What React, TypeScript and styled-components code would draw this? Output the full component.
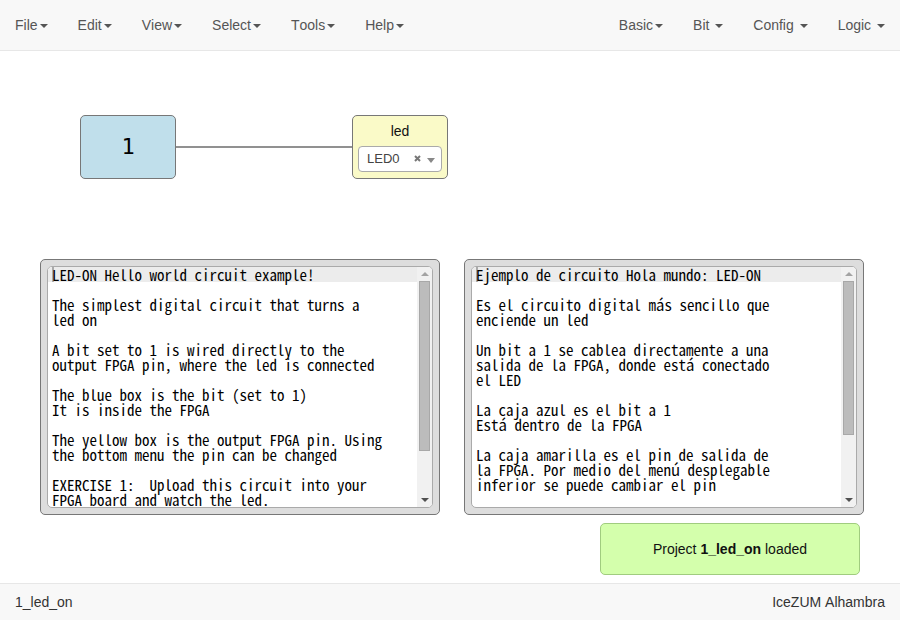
import React, { useState } from "react";
import styled, { createGlobalStyle } from "styled-components";

const GlobalStyle = createGlobalStyle`
  * { box-sizing: border-box; }
  html, body { margin: 0; }
  body {
    background: #fff;
    color: #333;
    font-family: "Liberation Sans", Arial, sans-serif;
    font-size: 14px;
    font-kerning: none;
    line-height: 20px;
  }
  button, select, textarea { font: inherit; font-kerning: none; }
`;

const Page = styled.div`
  display: flex;
  flex-direction: column;
  min-height: 100vh;
`;

const Navbar = styled.nav`
  display: flex;
  justify-content: space-between;
  background: #f8f8f8;
  border-bottom: 1px solid #e7e7e7;
`;

const MenuGroup = styled.div`
  display: flex;
`;

const MenuButton = styled.button`
  padding: 15px;
  border: 0;
  background: none;
  color: #555;
  line-height: 20px;
  white-space: pre;
  cursor: pointer;
`;

const Caret = styled.span`
  display: inline-block;
  margin-left: 2px;
  vertical-align: middle;
  border-top: 4px solid;
  border-right: 4px solid transparent;
  border-left: 4px solid transparent;
`;

const Canvas = styled.main`
  position: relative;
  flex: 1;
  min-height: 532px;
  overflow: hidden;
`;

const Wires = styled.svg`
  position: absolute;
  inset: 0;
  width: 100%;
  height: 100%;
`;

const Node = styled.div<{ $x: number; $y: number }>`
  position: absolute;
  left: ${(p) => p.$x}px;
  top: ${(p) => p.$y}px;
  border: 1px solid #777;
  border-radius: 5px;
`;

const ConstantBlock = styled(Node)`
  display: grid;
  place-items: center;
  width: 96px;
  height: 64px;
  background: #c0dfeb;
  color: #000;
  font-family: "DejaVu Sans Mono", monospace;
  font-size: 22px;
`;

const OutputBlock = styled(Node)`
  display: flex;
  flex-direction: column;
  gap: 5px;
  width: 96px;
  height: 64px;
  padding: 5px;
  background: #fafac8;
`;

const BlockLabel = styled.label`
  color: #111;
  text-align: center;
`;

const PinField = styled.div`
  position: relative;
  height: 26px;
`;

const PinSelect = styled.select`
  appearance: none;
  display: block;
  width: 100%;
  height: 100%;
  padding: 0 28px 0 8px;
  border: 1px solid #aaa;
  border-radius: 4px;
  background: #fff;
  color: #444;
  font-size: 13px;
`;

const ClearButton = styled.button`
  position: absolute;
  top: 8px;
  right: 20px;
  display: flex;
  padding: 1px;
  border: 0;
  background: none;
`;

const PinArrow = styled.span`
  position: absolute;
  top: 12px;
  right: 7px;
  border-top: 5px solid #888;
  border-right: 4px solid transparent;
  border-left: 4px solid transparent;
  pointer-events: none;
`;

const NoteBlock = styled(Node)`
  width: 400px;
  padding: 6px;
  background: #ddd;
`;

const NoteEditor = styled.div`
  display: flex;
  height: 242px;
  border: 1px solid #aaa;
  border-radius: 5px;
  background: #fff;
  overflow: hidden;
`;

const NoteText = styled.textarea`
  flex: 1;
  min-width: 0;
  padding: 0 4px;
  border: 0;
  outline: 0;
  resize: none;
  overflow: hidden;
  white-space: pre;
  color: #000;
  background:
    linear-gradient(#aaa, #aaa) 4px 0 / 2px 15px no-repeat,
    linear-gradient(#ececec, #ececec) 0 0 / 100% 15px no-repeat;
  font-family: "Noto Sans Mono CJK SC", "DejaVu Sans Mono", monospace;
  font-size: 15px;
  line-height: 15px;
`;

const Scrollbar = styled.div`
  display: flex;
  flex-direction: column;
  align-items: center;
  justify-content: space-between;
  width: 15px;
  padding: 5px 0;
  background: #f1f1f1;
`;

const ScrollTrack = styled.div`
  flex: 1;
  width: 11px;
  margin: 5px 0;
`;

const ScrollThumb = styled.div<{ $size: number }>`
  height: ${(p) => p.$size}px;
  border: 1px solid #a8a8a8;
  background: #bcbcbc;
`;

const ScrollArrow = styled.span<{ $up?: boolean }>`
  border: 0 solid transparent;
  border-width: ${(p) => (p.$up ? "0 4px 4px" : "4px 4px 0")};
  border-bottom-color: ${(p) => (p.$up ? "#a3a3a3" : "transparent")};
  border-top-color: ${(p) => (p.$up ? "transparent" : "#505050")};
`;

const Toast = styled.div`
  position: absolute;
  right: 40px;
  bottom: 8px;
  width: 260px;
  padding: 15px;
  border: 1px solid #a0cc7f;
  border-radius: 5px;
  background: #d4ffac;
  color: #111;
  text-align: center;
`;

const StatusBar = styled.footer`
  display: flex;
  justify-content: space-between;
  padding: 8px 15px;
  border-top: 1px solid #e7e7e7;
  background: #f8f8f8;
`;

const mainMenus = ["File", "Edit", "View", "Select", "Tools", "Help"];
const blockMenus = ["Basic", "Bit ", "Config ", "Logic "];

const englishNote = `LED-ON Hello world circuit example!

The simplest digital circuit that turns a
led on

A bit set to 1 is wired directly to the
output FPGA pin, where the led is connected

The blue box is the bit (set to 1)
It is inside the FPGA

The yellow box is the output FPGA pin. Using
the bottom menu the pin can be changed

EXERCISE 1:  Upload this circuit into your
FPGA board and watch the led.`;

const spanishNote = `Ejemplo de circuito Hola mundo: LED-ON

Es el circuito digital más sencillo que
enciende un led

Un bit a 1 se cablea directamente a una
salida de la FPGA, donde está conectado
el LED

La caja azul es el bit a 1
Está dentro de la FPGA

La caja amarilla es el pin de salida de
la FPGA. Por medio del menú desplegable
inferior se puede cambiar el pin
`;

function Menu({ label }: { label: string }) {
  return (
    <MenuButton type="button" aria-haspopup="menu">
      {label}
      <Caret />
    </MenuButton>
  );
}

interface NoteProps {
  x: number;
  y: number;
  name: string;
  text: string;
  thumb: number;
}

function Note({ x, y, name, text, thumb }: NoteProps) {
  return (
    <NoteBlock $x={x} $y={y}>
      <NoteEditor>
        <NoteText aria-label={name} defaultValue={text} spellCheck={false} />
        <Scrollbar aria-hidden="true">
          <ScrollArrow $up />
          <ScrollTrack>
            <ScrollThumb $size={thumb} />
          </ScrollTrack>
          <ScrollArrow />
        </Scrollbar>
      </NoteEditor>
    </NoteBlock>
  );
}

export default function App() {
  const [pin, setPin] = useState("LED0");

  return (
    <Page>
      <GlobalStyle />
      <Navbar>
        <MenuGroup>
          {mainMenus.map((label) => (
            <Menu key={label} label={label} />
          ))}
        </MenuGroup>
        <MenuGroup>
          {blockMenus.map((label) => (
            <Menu key={label} label={label} />
          ))}
        </MenuGroup>
      </Navbar>

      <Canvas>
        <Wires aria-hidden="true">
          <path d="M176 96H352" stroke="#919191" strokeWidth="2" />
        </Wires>
        <ConstantBlock $x={80} $y={64}>1</ConstantBlock>
        <OutputBlock $x={352} $y={64}>
          <BlockLabel htmlFor="pin">led</BlockLabel>
          <PinField>
            <PinSelect id="pin" value={pin} onChange={(e) => setPin(e.target.value)}>
              <option value="" />
              <option>LED0</option>
              <option>LED1</option>
              <option>LED2</option>
              <option>LED3</option>
            </PinSelect>
            <ClearButton type="button" aria-label="Clear pin" onClick={() => setPin("")}>
              <svg width="7" height="7" viewBox="0 0 7 7">
                <path d="M1 1L6 6M6 1L1 6" stroke="#777" strokeWidth="2" />
              </svg>
            </ClearButton>
            <PinArrow />
          </PinField>
        </OutputBlock>
        <Note x={40} y={208} name="English note" text={englishNote} thumb={170} />
        <Note x={464} y={208} name="Spanish note" text={spanishNote} thumb={154} />
        <Toast role="status">
          Project <b>1_led_on</b> loaded
        </Toast>
      </Canvas>

      <StatusBar>
        <span>1_led_on</span>
        <span>IceZUM Alhambra</span>
      </StatusBar>
    </Page>
  );
}
